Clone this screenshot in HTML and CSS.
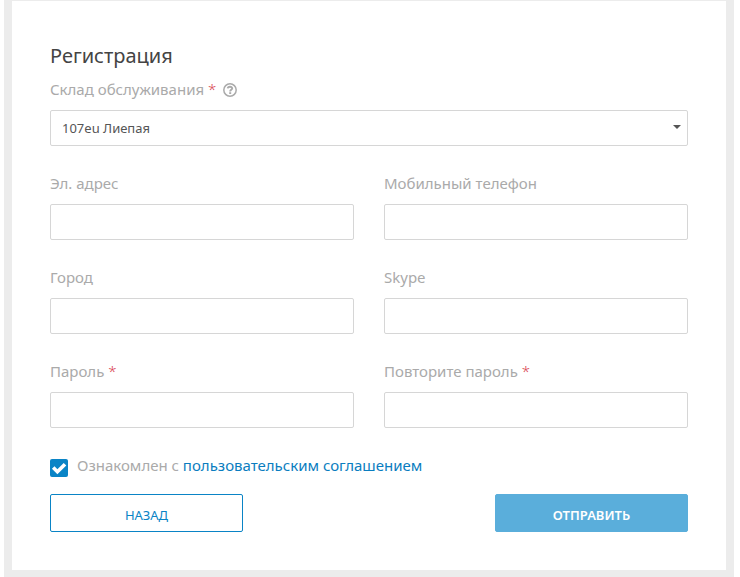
FILE: index.html
```html
<!DOCTYPE html>
<html lang="ru">

<head>
    <meta charset="UTF-8">
    <meta name="viewport" content="width=device-width, initial-scale=1.0">
    <title>Регистрация</title>
    <link rel="stylesheet" href="styles.css">
</head>

<body>
    <div class="frame">
        <form class="register-form">
            <h1 class="title">Регистрация</h1>

            <div class="form-group">
                <label class="label" for="warehouse">Склад обслуживания <span class="required">*</span>
                    <svg class="help-icon" viewBox="0 0 14 14" fill="none">
                        <circle cx="7" cy="7" r="6.2" stroke="#aaa" stroke-width="1.5"/>
                        <path d="M4.7 5.4C5 3 9.3 3.2 9.2 5.5C9.1 6.9 7.2 6.8 7.2 8.4" stroke="#aaa" stroke-width="1.9"/>
                        <path d="M6.2 9.2h2v1.8h-2z" fill="#aaa"/>
                    </svg>
                </label>
                <div class="select-wrap">
                    <select class="input select" id="warehouse">
                        <option>107eu Лиепая</option>
                    </select>
                </div>
            </div>

            <div class="row">
                <div class="form-group">
                    <label class="label" for="email">Эл. адрес</label>
                    <input type="email" class="input" id="email">
                </div>
                <div class="form-group">
                    <label class="label" for="phone">Мобильный телефон</label>
                    <input type="tel" class="input" id="phone">
                </div>
                <div class="form-group">
                    <label class="label" for="city">Город</label>
                    <input type="text" class="input" id="city">
                </div>
                <div class="form-group">
                    <label class="label" for="skype">Skype</label>
                    <input type="text" class="input" id="skype">
                </div>
                <div class="form-group">
                    <label class="label" for="password">Пароль <span class="required">*</span></label>
                    <input type="password" class="input" id="password">
                </div>
                <div class="form-group">
                    <label class="label" for="password2">Повторите пароль <span class="required">*</span></label>
                    <input type="password" class="input" id="password2">
                </div>
            </div>

            <div class="agreement">
                <span class="check">
                    <input type="checkbox" class="checkbox" id="agree" checked>
                    <svg class="check-icon" viewBox="0 0 18 18" fill="none">
                        <path d="M3.2 8.6L7.4 12.8L15 5.2" stroke="#fff" stroke-width="3.6"/>
                    </svg>
                </span>
                <label for="agree">Ознакомлен с <a href="#" class="link">пользовательским соглашением</a></label>
            </div>

            <div class="buttons">
                <button type="button" class="btn btn-back">НАЗАД</button>
                <button type="submit" class="btn btn-submit">ОТПРАВИТЬ</button>
            </div>
        </form>
    </div>
</body>
</html>
```
FILE: styles.css
```css
* {
    margin: 0;
    padding: 0;
    box-sizing: border-box;
    font-family: "Noto Sans", "Open Sans", sans-serif;
}

body {
    background-color: #fff;
}

.frame {
    margin: 0 6px 0 4px;
    padding: 1px 8px 7px;
    background-color: #ececec;
}

.register-form {
    padding: 39px 38px 38px;
    background-color: #fff;
}

.title {
    font-size: 20px;
    line-height: 32px;
    font-weight: 400;
    color: #444;
}

.label {
    display: block;
    height: 38px;
    padding-top: 5px;
    font-size: 15px;
    line-height: 24px;
    color: #aaa;
}

.required {
    color: #d9434f;
    font-weight: 300;
}

.help-icon {
    width: 14px;
    height: 14px;
    margin-left: 3px;
    vertical-align: -2px;
}

.input {
    display: block;
    width: 100%;
    height: 36px;
    padding: 0 11px;
    border: 1px solid #d6d6d6;
    border-radius: 2px;
    background-color: #fff;
    color: #555;
    font-size: 13px;
    outline: none;
}

.select-wrap {
    position: relative;
}

.select-wrap::after {
    content: "";
    position: absolute;
    top: 15px;
    right: 7px;
    border: 4px solid transparent;
    border-top-color: #555;
    border-bottom: 0;
    pointer-events: none;
}

.select {
    appearance: none;
}

.row {
    display: grid;
    grid-template-columns: 1fr 1fr;
    gap: 20px 30px;
    margin-top: 20px;
}

.agreement {
    display: flex;
    align-items: flex-end;
    gap: 9px;
    margin-top: 25px;
    font-size: 15px;
    line-height: 24px;
    color: #aaa;
}

.check {
    position: relative;
    width: 18px;
    height: 18px;
}

.checkbox {
    display: block;
    appearance: none;
    width: 18px;
    height: 18px;
    border-radius: 2px;
    background-color: #0a84c6;
}

.check-icon {
    position: absolute;
    top: 0;
    left: 0;
    width: 18px;
    height: 18px;
    pointer-events: none;
}

.link {
    color: #0a7dc0;
    text-decoration: none;
}

.buttons {
    display: flex;
    justify-content: space-between;
    margin-top: 17px;
}

.btn {
    width: 193px;
    height: 38px;
    padding-top: 3px;
    border: 1px solid #0a84c6;
    border-radius: 2px;
    background-color: #fff;
    color: #0a84c6;
    font-size: 13px;
    cursor: pointer;
}

.btn-submit {
    border-color: #5aaedb;
    background-color: #5aaedb;
    color: #fff;
    font-weight: 600;
}
```
